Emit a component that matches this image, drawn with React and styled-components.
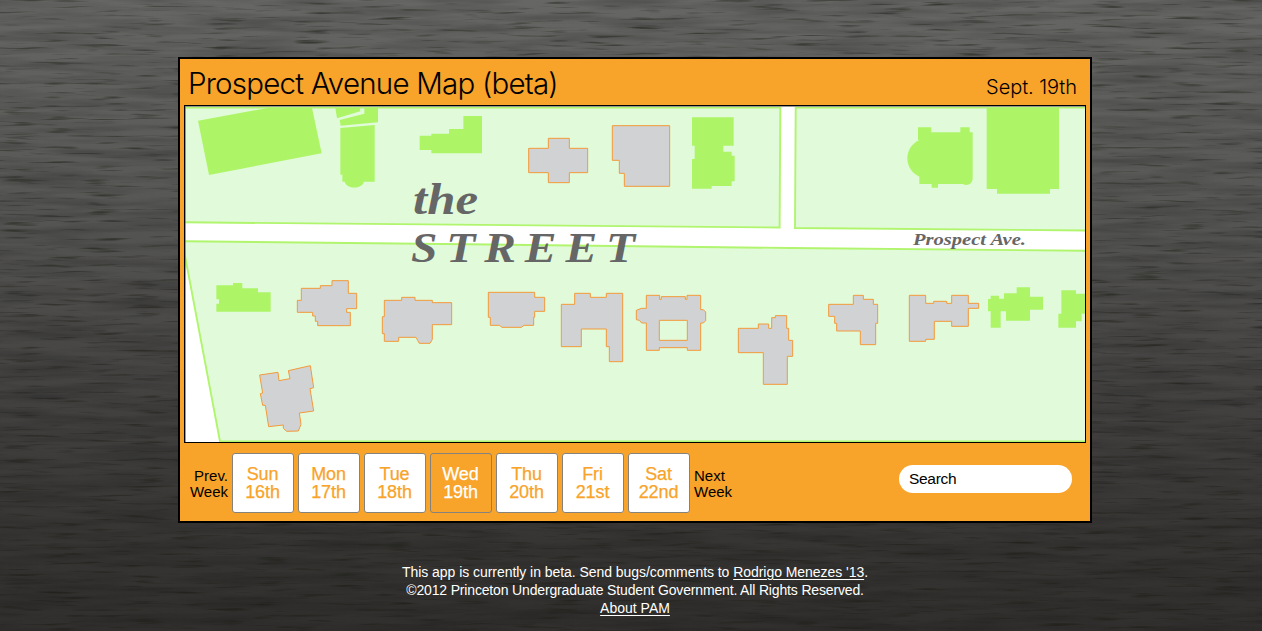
import React from 'react';
import styled, { createGlobalStyle } from 'styled-components';

const GlobalStyle = createGlobalStyle`
  * { box-sizing: border-box; }
  html, body { margin: 0; padding: 0; }
  body {
    background: #2c2b29;
    font-family: 'Liberation Sans', Arial, sans-serif;
    color: #000;
    overflow: hidden;
  }
`;

const Page = styled.div`
  position: relative;
  min-height: 631px;
  padding-top: 57px;
  padding-left: 178px;
  overflow: hidden;
  background: linear-gradient(#666664 0, #575755 200px, #424140 400px, #363533 540px, #302f2d 631px);
`;

const Grain = styled.svg`
  position: absolute;
  inset: 0;
  width: 100%;
  height: 100%;
`;

const Panel = styled.main`
  position: relative;
  width: 914px;
  height: 466px;
  padding: 0 4px;
  border: 2px solid #000;
  background: #f8a329;
`;

const Header = styled.header`
  display: flex;
  justify-content: space-between;
  align-items: baseline;
  height: 46px;
  padding: 5px 9px 0 4px;
`;

const Title = styled.h1`
  margin: 0;
  font: 300 29.5px/38px Inter, 'Liberation Sans', sans-serif;
  letter-spacing: -0.78px;
  white-space: nowrap;
`;

const CurrentDate = styled.div`
  font: 300 20px/26px Inter, 'Liberation Sans', sans-serif;
  letter-spacing: -0.05px;
  white-space: nowrap;
`;

const MapFrame = styled.div`
  width: 902px;
  height: 338px;
  border: 1px solid #000;
  background: #fff;
`;

const MapDrawing = styled.svg`
  display: block;
`;

const Toolbar = styled.div`
  display: flex;
  align-items: center;
  height: 78px;
  padding: 2px 14px 0 0;
`;

const WeekLink = styled.a`
  width: ${(p) => (p.$side === 'prev' ? 44 : 50)}px;
  margin-right: 4px;
  padding-top: 2px;
  text-align: ${(p) => (p.$side === 'prev' ? 'right' : 'left')};
  font: 400 15px/16px 'Liberation Sans', Arial, sans-serif;
`;

const Days = styled.div`
  display: flex;
  gap: 4px;
  margin-right: 4px;
`;

const Day = styled.button`
  width: 62px;
  height: 60px;
  padding: 0 1px 0 0;
  border: 1px solid #85827e;
  border-radius: 3px;
  background: ${(p) => (p.$active ? '#f8a329' : '#fff')};
  color: ${(p) => (p.$active ? '#fff' : '#f8a329')};
  font: 400 18px/18px 'Liberation Sans', Arial, sans-serif;
  letter-spacing: -0.1px;
  -webkit-text-stroke: 0.25px currentColor;
`;

const Search = styled.input`
  width: 173px;
  height: 28px;
  margin: 0 0 8px auto;
  padding: 0 10px;
  border: 0;
  border-radius: 14px;
  background: #fff;
  font: 400 15.5px 'Liberation Sans', Arial, sans-serif;
  letter-spacing: -0.3px;
  color: #000;
  &::placeholder { color: #000; opacity: 1; }
`;

const Footer = styled.footer`
  position: relative;
  width: 914px;
  padding-top: 40px;
  color: #fff;
  text-align: center;
  font-size: 14px;
  line-height: 18px;
`;

const FooterLine = styled.div`
  letter-spacing: ${(p) => p.$tracking || '0'};
`;

const FooterLink = styled.a`
  text-decoration: underline;
  text-underline-offset: 2px;
`;

// Outlines are surveyed in thirds of a map pixel, one sheet per map section.
const sheets = [
  {
    origin: [-5, -56],
    plain: [
      'M54 212L262 174H396L425 310L87 375Z',
      'M466 174H539L541 184L471 205Z',
      'M553 174H594V217L482 227L479 210L553 191Z',
      'M481 234L584 225V395H552C547 418 499 418 494 395H487V374H481Z',
      'M719 257H754V251H807V237H850V198H906V310H754V300H719Z',
    ],
    clubs: [],
  },
  {
    origin: [295, -56],
    plain: ['M636 202H761V287H730V305H755V317H764V394H755V408H695V416H636V327H644V287H636Z'],
    clubs: [
      'M146 295H205V265H268V295H323V368H268V398H205V368H146Z',
      'M397 227H569V409H433V370H418V331H397Z',
    ],
  },
  {
    origin: [605, -56],
    plain: [
      'M384 232H424V247H511V232H539V247H548V385C548 402 530 410 519 402H444V413H425V402H388V380C340 358 340 292 388 270H384Z',
      'M590 174H807V417H780V431H621V417H590Z',
    ],
    clubs: [],
  },
  {
    origin: [-5, 134],
    plain: ['M109 136H159V129H187V145H234V157H272V215H109V191H117V178H109Z'],
    clubs: [
      'M364 145H421V137H456V122H505V160H530V206H500V217H511V257H413V244H406V228H398V217H352V181H364Z',
      'M613 181H665V172H705V181H757V188H815V254H757V298L750 310H718L708 292H656V304H613V281H607V230H613Z',
      'M239 405L294 397L297 422L330 416L325 392L391 377L401 443L390 446L401 513L358 519L363 553L355 573L320 574L310 565V555L266 560L256 496L248 496L241 461L248 459Z',
    ],
  },
  {
    origin: [295, 134],
    plain: [],
    clubs: [
      'M25 157H164V172H194V214H164V232H161V256H132L124 262H66L58 256H31V232H25Z',
      'M284 160H331V172H379V160H428V365H388V320H379V267H304V320H244V193H284Z',
      'M499 166H539V178H544V170H616V178H621V166H662V209H670L677 216V242L670 249H662V331H622V323H538V331H499V249H485L478 241L469 239V211L484 205H499ZM538 241V301H622V241Z',
      'M775 265H835V252H866V265H875V233H886V227H920V265H926V301H938V349H922V433H850V338H775Z',
    ],
  },
  {
    origin: [605, 134],
    plain: [
      'M594 177H602V167H627V176H642V160H680V142H720V170H759V209H720V242H648V214H632V263H602V214H594Z',
      'M814 151H858V161H887V221H875V244H858V263H805V221H814Z',
    ],
    clubs: [
      'M116 193H190V166H220V178H250V193H263V250H257V314H211V273H140V250H134V229H116Z',
      'M358 166H407V190H431V184H470V190H485V166H535V190H566V205H535V259H485V244H433V298H407V304H358Z',
    ],
  },
];

const days = [
  ['Sun', '16th'],
  ['Mon', '17th'],
  ['Tue', '18th'],
  ['Wed', '19th'],
  ['Thu', '20th'],
  ['Fri', '21st'],
  ['Sat', '22nd'],
];

function WoodGrain() {
  return (
    <Grain aria-hidden="true">
      <filter id="streaks" x="0" y="0" width="100%" height="100%" colorInterpolationFilters="sRGB">
        <feTurbulence type="fractalNoise" baseFrequency="0.024 0.34" numOctaves="2" seed="8" />
        <feColorMatrix values="0 0 0 0 0.1  0 0 0 0 0.1  0 0 0 0 0.07  3.5 0 0 0 -2.05" />
      </filter>
      <filter id="fibres" x="0" y="0" width="100%" height="100%" colorInterpolationFilters="sRGB">
        <feTurbulence type="fractalNoise" baseFrequency="0.01 0.12" numOctaves="3" seed="21" />
        <feColorMatrix values="0 0 0 0 0.05  0 0 0 0 0.05  0 0 0 0 0.05  1 0 0 0 -0.35" />
      </filter>
      <rect width="100%" height="100%" filter="url(#fibres)" opacity="0.45" />
      <rect width="100%" height="100%" filter="url(#streaks)" opacity="0.55" />
    </Grain>
  );
}

function StreetMap() {
  return (
    <MapDrawing width="900" height="336" viewBox="0 0 900 336">
      <g fill="#e1fbda" stroke="#b0f56d" strokeWidth="1.9">
        <path d="M-2 1.6H595.3L594.6 121.5L-2 116.3Z" />
        <path d="M902 1.6H610.7L610 122L902 124.5Z" />
        <path d="M-2 135.3L305 138.5L605 142L902 144.8V335.5H35L0 150Z" />
      </g>
      <path d="M0 .5H900M.5 0V336" stroke="#777" strokeOpacity=".75" />
      {sheets.map(({ origin, plain, clubs }) => (
        <g key={origin.join()} transform={`translate(${origin[0]} ${origin[1]}) scale(${1 / 3})`}>
          {plain.map((d) => (
            <path key={d} d={d} fill="#adf567" />
          ))}
          {clubs.map((d) => (
            <path key={d} d={d} fill="#d1d2d4" fillRule="evenodd" stroke="#f39a3a" strokeWidth="3" />
          ))}
        </g>
      ))}
      <g fill="#666" fontFamily="'Liberation Serif', serif" fontWeight="700" fontStyle="italic">
        <text x="228" y="107.5" fontSize="44" textLength="65" lengthAdjust="spacingAndGlyphs">the</text>
        <text x="226" y="156" fontSize="42.5" letterSpacing="8" textLength="233" lengthAdjust="spacingAndGlyphs">STREET</text>
        <text x="728" y="139" fontSize="17.5" textLength="113" lengthAdjust="spacingAndGlyphs">Prospect Ave.</text>
      </g>
    </MapDrawing>
  );
}

export default function App() {
  return (
    <>
      <GlobalStyle />
      <Page>
        <WoodGrain />
        <Panel>
          <Header>
            <Title>Prospect Avenue Map (beta)</Title>
            <CurrentDate>Sept. 19th</CurrentDate>
          </Header>
          <MapFrame>
            <StreetMap />
          </MapFrame>
          <Toolbar>
            <WeekLink $side="prev">Prev.<br />Week</WeekLink>
            <Days>
              {days.map(([name, date]) => (
                <Day key={name} $active={name === 'Wed'}>
                  {name}<br />{date}
                </Day>
              ))}
            </Days>
            <WeekLink $side="next">Next<br />Week</WeekLink>
            <Search placeholder="Search" aria-label="Search" />
          </Toolbar>
        </Panel>
        <Footer>
          <FooterLine $tracking="-0.05px">
            This app is currently in beta. Send bugs/comments to <FooterLink>Rodrigo Menezes '13</FooterLink>.
          </FooterLine>
          <FooterLine $tracking="-0.16px">
            ©2012 Princeton Undergraduate Student Government. All Rights Reserved.
          </FooterLine>
          <FooterLine><FooterLink>About PAM</FooterLink></FooterLine>
        </Footer>
      </Page>
    </>
  );
}
